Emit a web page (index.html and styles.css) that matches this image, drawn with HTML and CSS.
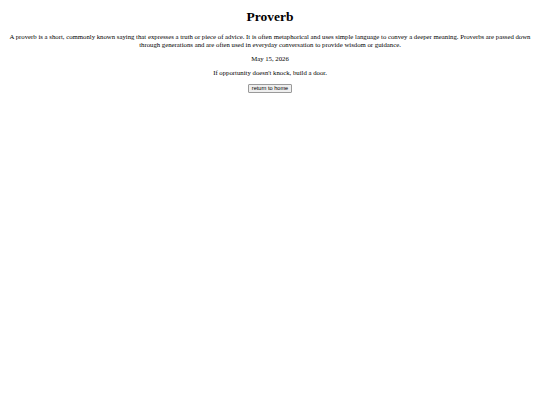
FILE: index.html
```html
<!DOCTYPE html>
<html lang="en">
<head>
  <meta charset="UTF-8" />
  <meta name="viewport" content="width=device-width, initial-scale=1" />
  <title>Proverb</title>
  <link rel="stylesheet" href="styles.css">
</head>
<body>

  <div class="page">
    <h1>Proverb</h1>
    <p>A proverb is a short, commonly known saying that expresses a truth or piece of advice. It is often metaphorical and uses simple language to convey a deeper meaning. Proverbs are passed down through generations and are often used in everyday conversation to provide wisdom or guidance.</p>
    <p id="date">May 15, 2026</p>
    <p id="proverb">If opportunity doesn't knock, build a door.</p>
    <button type="button">return to home</button>
  </div>

</body>
</html>
```

FILE: styles.css
```css
body {
  margin: 3.4px;
  font-family: "Liberation Serif", "Times New Roman", serif;
  font-size: 6.75px;
  color: #000;
  background: #fff;
}
.page {
  text-align: center;
}
h1 {
  font-size: 13.5px;
  margin: 6px 0 7.5px;
}
p {
  margin: 6px 0;
  line-height: 8px;
}
#proverb {
  margin-bottom: 7px;
}
button {
  font-family: "Liberation Sans", Arial, sans-serif;
  font-size: 5.6px;
  line-height: 6.5px;
  padding: 0.5px 2.5px;
  border: 1px solid #9a9a9a;
  border-radius: 1px;
  background: #efefef;
  color: #000;
}
```
